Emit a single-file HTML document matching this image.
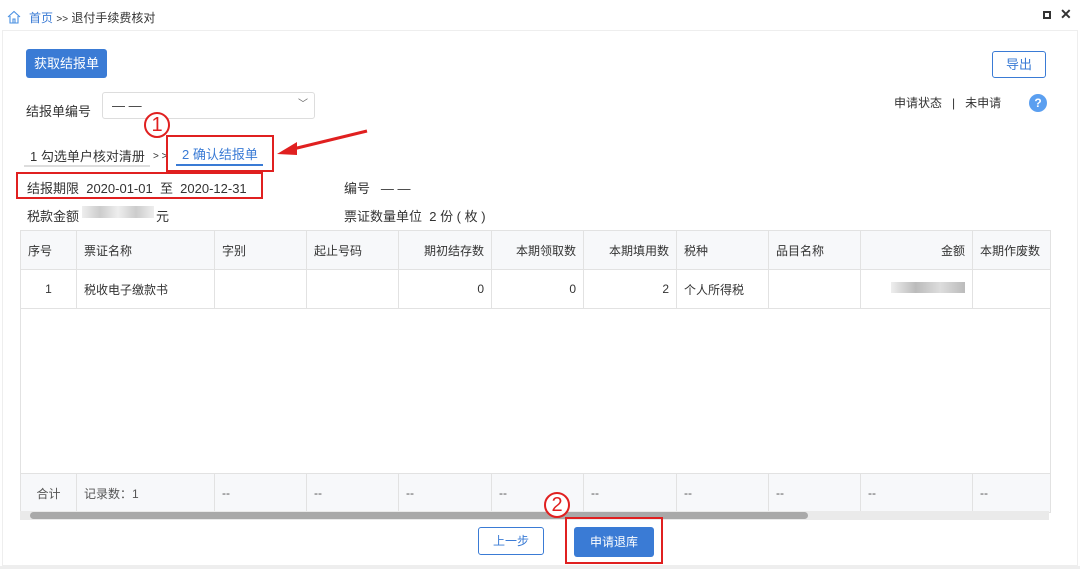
<!DOCTYPE html>
<html><head><meta charset="utf-8"><style>
*{box-sizing:border-box;margin:0;padding:0}
body{width:1080px;height:569px;background:#fff;font-family:"Liberation Sans","Noto Sans CJK SC",sans-serif;font-size:12px;color:#333;position:relative;overflow:hidden}
.a{position:absolute}
.frame{left:2px;top:30px;width:1076px;height:536px;border:1px solid #eee}
table{border-collapse:collapse;position:absolute;left:20px;top:230px;table-layout:fixed}
td{border:1px solid #e2e2e2;height:39px;padding:0 7px;white-space:nowrap;overflow:hidden;font-size:12px}
.h td{background:#f7f8fa}
.red{border:2px solid #e02020;position:absolute}
.circ{position:absolute;width:26px;height:26px;border:2px solid #e02020;border-radius:50%;color:#e02020;font-size:20px;line-height:22px;text-align:center;background:#fff}
</style></head><body>
<svg class="a" style="left:7px;top:10px" width="14" height="14" viewBox="0 0 14 14"><path d="M1 7 L7 1.5 L13 7 M3 6 V13 H11 V6 M6 13 V9 H8 V13" fill="none" stroke="#4a90e2" stroke-width="1.1"/></svg>
<div class="a" style="left:29px;top:9px;font-size:12px"><span style="color:#3a7bd5">首页</span> <span style="font-size:10px">&gt;&gt;</span> 退付手续费核对</div>
<div class="a" style="left:1043px;top:11px;width:8px;height:8px;border:2px solid #333"></div>
<div class="a" style="left:1060px;top:6px;font-size:14px;font-weight:bold">✕</div>
<div class="a frame"></div>
<div class="a" style="left:26px;top:49px;width:81px;height:29px;background:#3a7bd5;border-radius:3px;color:#fff;font-size:13px;line-height:29px;text-align:center">获取结报单</div>
<div class="a" style="left:992px;top:51px;width:54px;height:27px;border:1px solid #3a7bd5;border-radius:3px;color:#3a7bd5;font-size:13px;line-height:25px;text-align:center">导出</div>
<div class="a" style="left:26px;top:101px;font-size:13px">结报单编号</div>
<div class="a" style="left:102px;top:92px;width:213px;height:27px;border:1px solid #ddd;border-radius:3px;padding-left:9px;line-height:25px;font-size:13px">— —<span style="position:absolute;right:6px;top:-1px;color:#666;font-size:10px">﹀</span></div>
<div class="a" style="left:894px;top:94px;font-size:12px">申请状态 &nbsp;&nbsp;| &nbsp;&nbsp;未申请</div>
<div class="a" style="left:1029px;top:94px;width:18px;height:18px;border-radius:50%;background:#5b9ff0;color:#fff;font-weight:bold;text-align:center;line-height:18px;font-size:12px">?</div>
<div class="circ" style="left:144px;top:112px">1</div>
<div class="a" style="left:30px;top:146px;font-size:13px">1 勾选单户核对清册</div>
<div class="a" style="left:24px;top:165px;width:126px;height:2px;background:#ddd"></div>
<div class="a" style="left:153px;top:151px;font-size:10px">&gt; &gt;</div>
<div class="a" style="left:182px;top:144px;font-size:13px;color:#3a7bd5">2 确认结报单</div>
<div class="a" style="left:176px;top:164px;width:87px;height:2px;background:#3a7bd5"></div>
<div class="red" style="left:166px;top:135px;width:108px;height:37px"></div>
<svg class="a" style="left:275px;top:128px" width="95" height="32"><path d="M92 3 L18 21" stroke="#e02020" stroke-width="3"/><path d="M2 26 L22 14 L22 27 Z" fill="#e02020"/></svg>
<div class="red" style="left:16px;top:172px;width:247px;height:27px"></div>
<div class="a" style="left:27px;top:178px;font-size:13px">结报期限 &nbsp;2020-01-01 &nbsp;至 &nbsp;2020-12-31</div>
<div class="a" style="left:344px;top:178px;font-size:13px">编号 &nbsp;&nbsp;— —</div>
<div class="a" style="left:27px;top:206px;font-size:13px">税款金额</div>
<div class="a" style="left:82px;top:206px;width:72px;height:12px;background:linear-gradient(90deg,#eee,#ccc,#eee,#ccc,#eee)"></div>
<div class="a" style="left:156px;top:206px;font-size:13px">元</div>
<div class="a" style="left:344px;top:206px;font-size:13px">票证数量单位 &nbsp;2 份 ( 枚 )</div>
<table>
<colgroup><col style="width:56px"><col style="width:138px"><col style="width:92px"><col style="width:92px"><col style="width:93px"><col style="width:92px"><col style="width:93px"><col style="width:92px"><col style="width:92px"><col style="width:112px"><col style="width:78px"></colgroup>
<tr class="h"><td>序号</td><td>票证名称</td><td>字别</td><td>起止号码</td><td style="text-align:right">期初结存数</td><td style="text-align:right">本期领取数</td><td style="text-align:right">本期填用数</td><td>税种</td><td>品目名称</td><td style="text-align:right">金额</td><td>本期作废数</td></tr>
<tr><td style="text-align:center">1</td><td>税收电子缴款书</td><td></td><td></td><td style="text-align:right">0</td><td style="text-align:right">0</td><td style="text-align:right">2</td><td>个人所得税</td><td></td><td style="text-align:right"><span style="display:inline-block;width:74px;height:11px;background:linear-gradient(90deg,#eee,#bbb,#ddd,#bbb)"></span></td><td></td></tr>
<tr><td colspan="11" style="height:165px;border-bottom:1px solid #e2e2e2"></td></tr>
<tr class="h" style="color:#555"><td style="text-align:center;height:38px">合计</td><td>记录数：1</td><td>--</td><td>--</td><td>--</td><td>--</td><td>--</td><td>--</td><td>--</td><td>--</td><td>--</td></tr>
</table>
<div class="a" style="left:20px;top:511px;width:1029px;height:9px;background:#eaeaea"></div>
<div class="a" style="left:30px;top:512px;width:778px;height:7px;background:#a9a9a9;border-radius:4px"></div>
<div class="a" style="left:478px;top:527px;width:66px;height:28px;border:1px solid #3a7bd5;border-radius:3px;color:#3a7bd5;text-align:center;line-height:26px;font-size:12px">上一步</div>
<div class="a" style="left:574px;top:527px;width:80px;height:30px;background:#3a7bd5;border-radius:3px;color:#fff;text-align:center;line-height:30px;font-size:12px">申请退库</div>
<div class="red" style="left:565px;top:517px;width:98px;height:47px"></div>
<div class="circ" style="left:544px;top:492px">2</div>
<div class="a" style="left:0;top:566px;width:1080px;height:3px;background:#eee"></div>
</body></html>
